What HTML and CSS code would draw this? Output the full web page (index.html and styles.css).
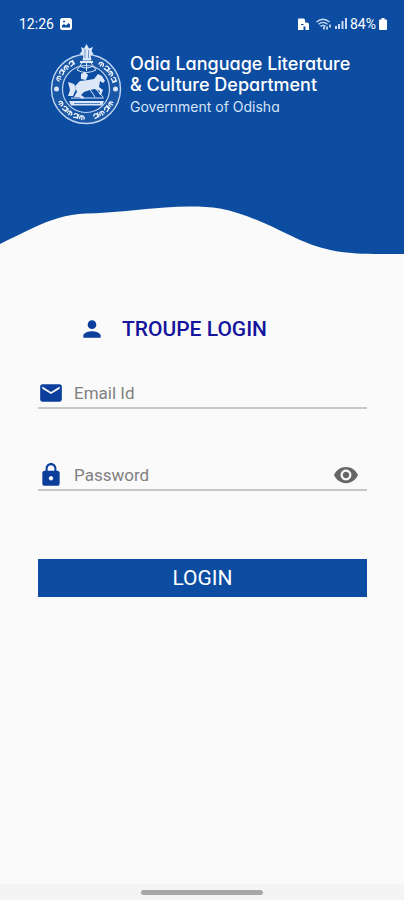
FILE: index.html
```html
<!DOCTYPE html>
<html lang="en">
<head>
    <meta charset="UTF-8">
    <meta name="viewport" content="width=device-width, initial-scale=1.0">
    <title>Troupe Login</title>
    <link rel="stylesheet" href="styles.css">
</head>
<body>
    <header class="header">
        <div class="status-bar">
            <span class="time">12:26</span>
            <svg class="status-photo" width="12" height="12" viewBox="0 0 12 12">
                <rect width="12" height="12" rx="2.5" fill="#fff"/>
                <path d="M2 9.5V7.5L4 6l2 1.5L8.500 5 10 6.500v3z" fill="#0c4da2"/>
                <circle cx="4" cy="3.500" r="1" fill="#0c4da2"/>
            </svg>
            <div class="status-icons">
                <svg width="11" height="12" viewBox="0 0 11 12">
                    <path d="M0 1.500Q0 0.500 1 0.500H5.500Q7 0.500 7 2V4.500H9Q11 4.500 11 6.500V12H7.500V8.500H5.500V12H0z" fill="#fff"/>
                    <path d="M3 6.500h2.500" stroke="#0c4da2"/>
                </svg>
                <svg class="wifi" width="16" height="12" viewBox="0 0 16 12" fill="none" stroke="#c9dbf5" stroke-width="1.400">
                    <path d="M0.500 4Q7 -1.500 13.500 4M2.500 6.200Q7 2.500 11.500 6.200M4.500 8.400Q7 6.400 9.500 8.400"/>
                    <path d="M8 8.500v3M11 8.500v3M14 6.500v3" stroke="#fff"/>
                </svg>
                <svg width="12" height="11" viewBox="0 0 12 11" fill="#c9dbf5">
                    <path d="M0 8h2v3H0zM3 6h2v5H3zM6.500 3h2v8h-2zM10 0h2v11h-2z"/>
                </svg>
                <span class="battery-text">84%</span>
                <svg width="8" height="12" viewBox="0 0 8 12">
                    <path d="M2.500 0h3v1.500H7a1 1 0 0 1 1 1V11a1 1 0 0 1-1 1H1a1 1 0 0 1-1-1V2.500a1 1 0 0 1 1-1h1.500z" fill="#fff"/>
                </svg>
            </div>
        </div>

        <div class="brand">
            <svg class="emblem" width="72" height="82" viewBox="0 0 72 82" fill="none" stroke="#c3d7f2">
                <defs>
                    <path id="mark-a" d="M-2 18.500a2.300 2.300 0 1 1 4 0M0 16v3.500"/>
                    <path id="mark-b" d="M-2 16.500a2 2 0 1 1 3 1.800l-3 .5M2.500 14v5"/>
                </defs>
                <!-- rings -->
                <circle cx="36" cy="46" r="34.500" fill="#ffffff" fill-opacity="0.060" stroke-width="1.400"/>
                <circle cx="36" cy="46" r="23.500" fill="#0c4da2" stroke-width="1.200"/>
                <!-- ring ornaments -->
                <g transform="translate(36 46)" stroke="#eef4fd" stroke-width="1.300">
                    <use href="#mark-a" transform="rotate(-69) translate(0 -46)"/>
                    <use href="#mark-b" transform="rotate(-56) translate(0 -46)"/>
                    <use href="#mark-a" transform="rotate(-43) translate(0 -46)"/>
                    <use href="#mark-b" transform="rotate(-30) translate(0 -46)"/>
                    <use href="#mark-a" transform="rotate(32) translate(0 -46)"/>
                    <use href="#mark-b" transform="rotate(45) translate(0 -46)"/>
                    <use href="#mark-a" transform="rotate(58) translate(0 -46)"/>
                    <use href="#mark-b" transform="rotate(71) translate(0 -46)"/>
                    <use href="#mark-a" transform="rotate(60) translate(0 12)"/>
                    <use href="#mark-b" transform="rotate(47) translate(0 12)"/>
                    <use href="#mark-a" transform="rotate(34) translate(0 12)"/>
                    <use href="#mark-b" transform="rotate(21) translate(0 12)"/>
                    <use href="#mark-a" transform="rotate(8) translate(0 12)"/>
                    <use href="#mark-b" transform="rotate(-20) translate(0 12)"/>
                    <use href="#mark-a" transform="rotate(-33) translate(0 12)"/>
                    <use href="#mark-b" transform="rotate(-46) translate(0 12)"/>
                    <use href="#mark-a" transform="rotate(-59) translate(0 12)"/>
                </g>
                <g fill="#dce8f8" stroke="none">
                    <circle cx="6.500" cy="46" r="2.500"/>
                    <circle cx="65.500" cy="46" r="2.500"/>
                    <!-- lion capital -->
                    <path d="M31 4l3 1.500L36.500 1 39 5.500 43 4l-1.500 4 2 3-3 1.500 1 5h-9l1-5-4-1.500 2.500-3z"/>
                    <path d="M30 18h13v2H30z"/>
                    <!-- horse and warrior -->
                    <path d="M24 54l3-5-2-6 5-5 8-1 6-1 4-5 4 2 3 5-2 2-3-2-1 6 4 3-2 5-2-1 1-3-5-2-5 1-6 2-3 3 3 2-1 2-4-2z"/>
                    <path d="M18 39l6 2 2 5-3 7h-5l2-6zM31 31l4-2 3 3-2 5-5-1z"/>
                    <path d="M19 58h35l-2 4.500H21z"/>
                </g>
                <path d="M32 20l-5 7M41 20l5 7M27 27q9 5 19 0M36.500 20v8M30 23q6 4 13 0" stroke="#dce8f8"/>
                <path d="M37 42l8 12M44 44l9 10M21 55h33M28 40l8 3" stroke="#dce8f8"/>
                <path d="M24 60.500h26" stroke="#4e7fc0"/>
                <path d="M35 6v9M38.500 7v8" stroke="#4e7fc0" stroke-width="0.800"/>
            </svg>
            <div class="brand-text">
                <h1>Odia Language Literature<br>&amp; Culture Department</h1>
                <p>Government of Odisha</p>
            </div>
        </div>

        <svg class="wave" viewBox="0 0 404 60" preserveAspectRatio="none">
            <path d="M0 60V44C10 39 22 33 35 27C50 20 66 14.500 86 13.500C114 13 140 9 165 7.500C184 6 204 6 220 8.500C250 14 280 31 300 40C335 55 355 54 404 54V60z" fill="#fafafa"/>
        </svg>
    </header>

    <main class="content">
        <h2 class="title">
            <svg width="26" height="26" viewBox="0 0 24 24" fill="#0c3f9c">
                <path d="M12 12c2.210 0 4-1.790 4-4s-1.790-4-4-4-4 1.790-4 4 1.790 4 4 4zm0 2c-2.670 0-8 1.340-8 4v2h16v-2c0-2.660-5.330-4-8-4z"/>
            </svg>
            TROUPE LOGIN
        </h2>

        <form class="login-form">
            <div class="field">
                <label for="email" aria-label="Email Id">
                    <svg width="26" height="26" viewBox="0 0 24 24" fill="#0c3f9c">
                        <path d="M20 4H4c-1.100 0-1.990.9-1.990 2L2 18c0 1.100.9 2 2 2h16c1.100 0 2-.9 2-2V6c0-1.100-.9-2-2-2zm0 4l-8 5-8-5V6l8 5 8-5v2z"/>
                    </svg>
                </label>
                <input type="email" id="email" placeholder="Email Id">
            </div>

            <div class="field">
                <label for="password" aria-label="Password">
                    <svg width="26" height="26" viewBox="0 0 24 24" fill="#0c3f9c">
                        <path d="M18 8h-1V6c0-2.760-2.240-5-5-5S7 3.240 7 6v2H6c-1.100 0-2 .9-2 2v10c0 1.100.9 2 2 2h12c1.100 0 2-.9 2-2V10c0-1.100-.9-2-2-2zm-6 9c-1.100 0-2-.9-2-2s.9-2 2-2 2 .9 2 2-.9 2-2 2zm3.100-9H8.900V6c0-1.710 1.390-3.100 3.100-3.100s3.100 1.390 3.100 3.100v2z"/>
                    </svg>
                </label>
                <input type="password" id="password" placeholder="Password">
                <button type="button" class="toggle" aria-label="Show password">
                    <svg width="26" height="26" viewBox="0 0 24 24" fill="#666">
                        <path d="M12 4.500C7 4.500 2.730 7.610 1 12c1.730 4.390 6 7.500 11 7.500s9.270-3.110 11-7.500c-1.730-4.390-6-7.500-11-7.500zM12 17c-2.760 0-5-2.240-5-5s2.240-5 5-5 5 2.240 5 5-2.240 5-5 5zm0-8c-1.660 0-3 1.340-3 3s1.340 3 3 3 3-1.340 3-3-1.340-3-3-3z"/>
                    </svg>
                </button>
            </div>

            <button type="submit" class="login">LOGIN</button>
        </form>
    </main>

    <footer class="nav-bar">
        <div class="handle"></div>
    </footer>
</body>
</html>
```
FILE: styles.css
```css
* {
    box-sizing: border-box;
    margin: 0;
    padding: 0;
}

body {
    display: flex;
    flex-direction: column;
    min-height: 100vh;
    background-color: #fafafa;
    font-family: Roboto, sans-serif;
}

svg {
    display: block;
    flex-shrink: 0;
}

.header {
    background-color: #0c4da2;
    color: white;
}

.status-bar {
    display: flex;
    align-items: center;
    gap: 6px;
    height: 43px;
    padding: 4px 17px 0 19px;
    font-size: 14px;
}

.status-icons {
    display: flex;
    align-items: center;
    gap: 3px;
    margin-left: auto;
}

.wifi {
    margin-left: 4px;
}

.brand {
    display: flex;
    gap: 8px;
    height: 157px;
    padding: 0 16px 0 50px;
}

.brand-text {
    padding-top: 10px;
    font-family: Inter, sans-serif;
    font-feature-settings: "cv11";
    white-space: nowrap;
}

.brand-text h1 {
    font-size: 18px;
    font-weight: 500;
    line-height: 21px;
}

.brand-text p {
    padding-top: 2px;
    font-size: 14px;
    line-height: 20px;
    color: #d5e3f7;
}

.wave {
    width: 100%;
    height: 60px;
}

.content {
    flex: 1;
    padding: 56px 37px 24px 38px;
}

.title {
    display: flex;
    align-items: center;
    gap: 17px;
    padding-left: 41px;
    font-size: 21px;
    font-weight: 500;
    line-height: 26px;
    color: #14149c;
}

.login-form {
    padding-top: 37px;
}

.field {
    display: flex;
    align-items: center;
    height: 30px;
    margin-bottom: 52px;
    border-bottom: 2px solid #c8c8c8;
}

.field input {
    flex: 1;
    min-width: 0;
    margin-left: 10px;
    border: none;
    outline: none;
    background: none;
    font-family: inherit;
    font-size: 17px;
    color: #333;
}

.field input::placeholder {
    color: #808080;
}

.toggle {
    margin-right: 8px;
    border: none;
    background: none;
    cursor: pointer;
}

.login {
    display: block;
    width: 100%;
    height: 38px;
    margin-top: 68px;
    border: none;
    background-color: #0c4da2;
    color: white;
    font-family: inherit;
    font-size: 21px;
    cursor: pointer;
}

.nav-bar {
    display: flex;
    justify-content: center;
    height: 16px;
    padding-top: 6px;
    background-color: #f4f4f4;
}

.handle {
    width: 30%;
    height: 5px;
    border-radius: 3px;
    background-color: #a8a8a8;
}
```
